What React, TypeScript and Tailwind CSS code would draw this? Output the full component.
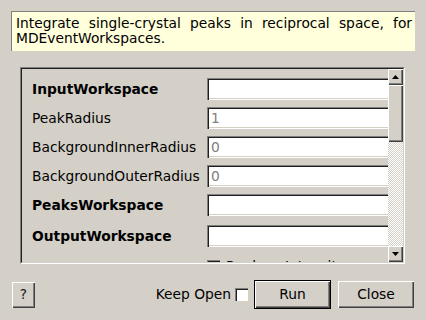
import React from 'react'

const sunken =
  'shadow-[inset_1px_1px_0_#808080,inset_2px_2px_0_#202020,inset_-1px_-1px_0_#ffffff,inset_-2px_-2px_0_#d4d0c8]'
const raised =
  'shadow-[inset_1px_1px_0_#ffffff,inset_-1px_-1px_0_#404040,inset_-2px_-2px_0_#808080]'

interface Row {
  label: string
  bold?: boolean
  value?: string
  mt: string
}

const rows: Row[] = [
  { label: 'InputWorkspace', bold: true, mt: 'mt-[9px]' },
  { label: 'PeakRadius', value: '1', mt: 'mt-[7px]' },
  { label: 'BackgroundInnerRadius', value: '0', mt: 'mt-[7px]' },
  { label: 'BackgroundOuterRadius', value: '0', mt: 'mt-[7px]' },
  { label: 'PeaksWorkspace', bold: true, mt: 'mt-[7px]' },
  { label: 'OutputWorkspace', bold: true, mt: 'mt-[9px]' },
]

function Arrow({ up }: { up?: boolean }) {
  return (
    <svg width="7" height="4" viewBox="0 0 7 4" aria-hidden>
      <path d={up ? 'M3.5 0L7 4H0z' : 'M0 0H7L3.5 4z'} fill="#000" />
    </svg>
  )
}

export default function App() {
  return (
    <div className="w-[426px] h-[320px] overflow-hidden bg-[#d4d0c8] font-['DejaVu_Sans',sans-serif] text-[13.8px] text-black">
      {/* Description */}
      <div className="pt-[11px] pl-[11px]">
        <div className="w-[404px] h-[40px] bg-[#ffffdc] border-t border-l border-[#808080] pl-[4px] pr-[3px] pt-[4px] leading-[15px] text-justify [text-align-last:left]">
          Integrate single-crystal peaks in reciprocal space, for MDEventWorkspaces.
        </div>
      </div>

      {/* Properties scroll area */}
      <div className="ml-[20px] mt-[16px] w-[385px] h-[197px] border-t border-l border-[#808080] border-b border-r border-b-white border-r-white">
        <div className="h-full border-t border-l border-[#202020] border-b border-r border-b-[#d4d0c8] border-r-[#d4d0c8] flex">
          <div className="flex-1 overflow-hidden">
            {rows.map((r) => (
              <div key={r.label} className={`${r.mt} flex items-center h-[22px]`}>
                <div className={`w-[185px] pl-[10px] shrink-0 whitespace-nowrap ${r.bold ? 'font-bold' : ''}`}>{r.label}</div>
                <div className={`w-[200px] shrink-0 h-[22px] bg-white ${sunken} pl-[4px] flex items-center text-[#808080]`}>
                  {r.value}
                </div>
              </div>
            ))}
            <div className="mt-[11px] flex items-center h-[16px] pl-[185px] gap-[6px]">
              <div className="w-[13px] h-[13px] bg-white shrink-0 shadow-[inset_1px_1px_0_#808080,inset_2px_2px_0_#202020]" />
              <span className="whitespace-nowrap">Replace Intensity</span>
            </div>
          </div>

          {/* Scrollbar */}
          <div className="w-[15px] flex flex-col">
            <div className={`h-[16px] bg-[#d4d0c8] ${raised} flex items-center justify-center`}>
              <Arrow up />
            </div>
            <div className={`h-[57px] bg-[#d4d0c8] ${raised}`} />
            <div className="flex-1 bg-[repeating-conic-gradient(#d4d0c8_0_25%,#ffffff_0_50%)] bg-[length:2px_2px]" />
            <div className={`h-[16px] bg-[#d4d0c8] ${raised} flex items-center justify-center`}>
              <Arrow />
            </div>
          </div>
        </div>
      </div>

      {/* Buttons */}
      <div className="mt-[16px] flex items-center px-[12px]">
        <div className={`w-[23px] h-[26px] ${raised} flex items-center justify-center text-[#202020]`}>?</div>
        <div className="flex-1" />
        <span>Keep Open</span>
        <div className="ml-[4px] w-[13px] h-[13px] bg-white shadow-[inset_1px_1px_0_#808080,inset_2px_2px_0_#202020]" />
        <div className="ml-[6px] w-[77px] h-[29px] border border-black">
          <div className={`w-full h-full ${raised} flex items-center justify-center`}>Run</div>
        </div>
        <div className={`ml-[7px] w-[76px] h-[27px] ${raised} flex items-center justify-center`}>Close</div>
      </div>
    </div>
  )
}
